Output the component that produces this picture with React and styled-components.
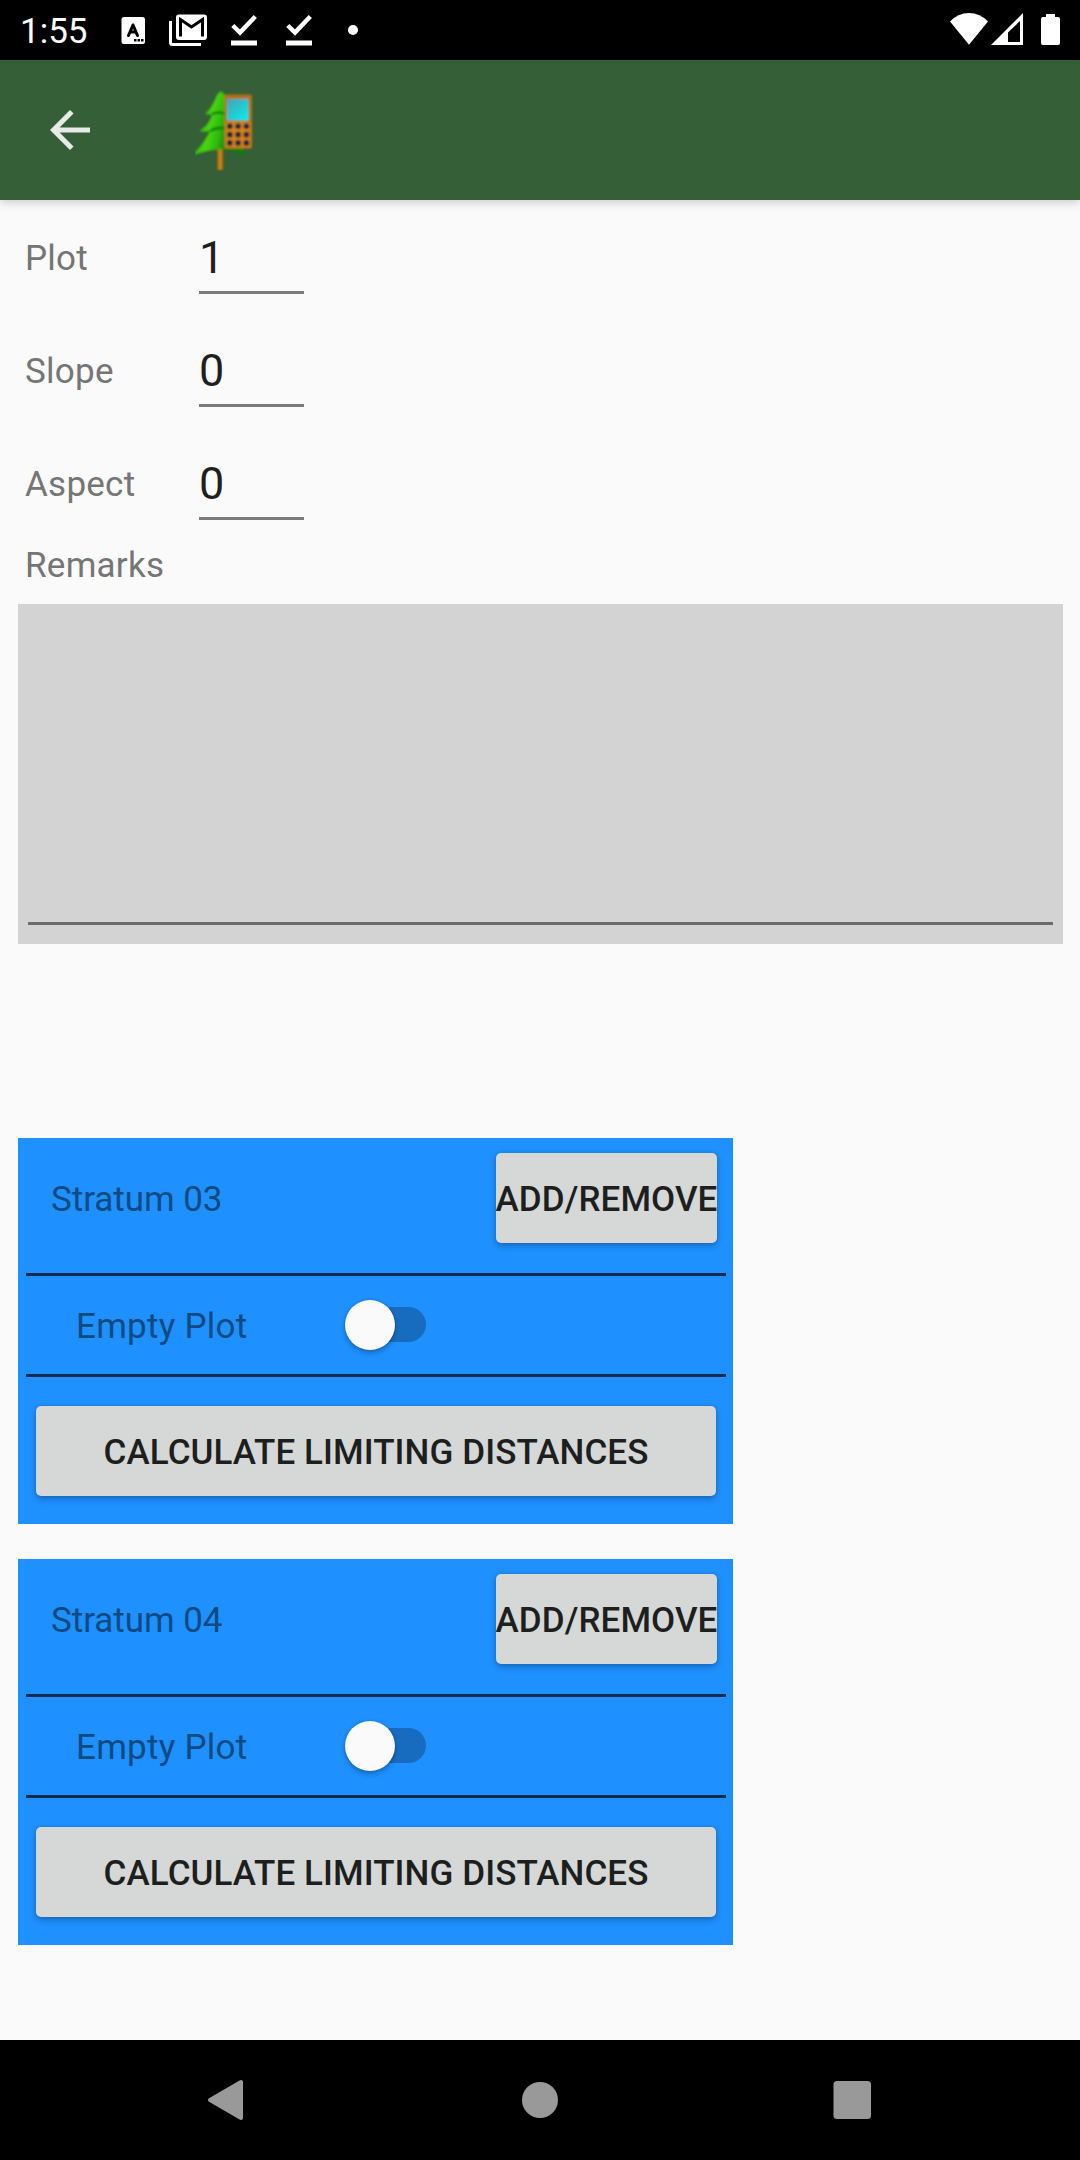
import React, { useState } from "react";
import styled, { createGlobalStyle } from "styled-components";

const GlobalStyle = createGlobalStyle`
  *, *::before, *::after { box-sizing: border-box; }
  body {
    margin: 0;
    background: #fafafa;
    font-family: Roboto, "Noto Sans", sans-serif;
  }
`;

const Screen = styled.div`
  width: 1080px;
  height: 2160px;
  display: flex;
  flex-direction: column;
  overflow: hidden;
  background: #fafafa;
`;

const StatusBar = styled.header`
  flex: none;
  height: 60px;
  padding: 0 18px 0 20px;
  display: flex;
  align-items: center;
  justify-content: space-between;
  background: #000;
  color: #fff;
`;

const Cluster = styled.div`
  display: flex;
  align-items: center;
`;

const Clock = styled.span`
  width: 101px;
  font-size: 35px;
  line-height: 60px;
  padding-top: 3px;
`;

const Glyph = styled.svg`
  display: block;
  flex: none;
`;

const AppBar = styled.div`
  flex: none;
  height: 140px;
  display: flex;
  align-items: center;
  padding-left: 40px;
  gap: 95px;
  background: #355f37;
  box-shadow: 0 2px 8px rgba(0, 0, 0, 0.14), 0 5px 10px rgba(0, 0, 0, 0.05);
`;

const IconButton = styled.button`
  border: 0;
  padding: 0;
  background: none;
  display: flex;
`;

const Content = styled.main`
  flex: 1;
  display: flex;
  flex-direction: column;
  padding: 20px 17px 0 18px;
`;

const Field = styled.label`
  height: 113px;
  display: flex;
  align-items: flex-start;
`;

const Caption = styled.span`
  width: ${(p) => p.$width || "auto"};
  padding: ${(p) => p.$pad || "18px 0 0 7px"};
  font-size: 35px;
  line-height: 42px;
  letter-spacing: ${(p) => p.$spacing || "0.25px"};
  white-space: nowrap;
  color: ${(p) => p.$color || "#757575"};
`;

const NumberInput = styled.input`
  width: 105px;
  height: 74px;
  padding: 4px 0 0;
  border: 0;
  border-bottom: 3px solid #7b7b7b;
  border-radius: 0;
  outline: 0;
  background: none;
  font: 400 45px Roboto, sans-serif;
  color: #1f1f1f;
`;

const RemarksCaption = styled(Caption)`
  height: 59px;
  margin-top: -14px;
`;

const RemarksBox = styled.div`
  height: 340px;
  padding: 0 10px 19px;
  display: flex;
  background: #d3d3d3;
`;

const RemarksInput = styled.textarea`
  flex: 1;
  border: 0;
  border-bottom: 3px solid #6b6b6b;
  border-radius: 0;
  resize: none;
  outline: 0;
  background: none;
  font: 400 45px Roboto, sans-serif;
`;

const StratumList = styled.div`
  display: flex;
  flex-direction: column;
  gap: 35px;
  margin-top: 194px;
`;

const Card = styled.section`
  width: 715px;
  height: 386px;
  padding: 0 7px 0 8px;
  background: #1e90ff;
`;

const CardHead = styled.div`
  height: 138px;
  padding: 15px 9px 0 0;
  display: flex;
  justify-content: space-between;
  align-items: flex-start;
  border-bottom: 3px solid #0c2a49;
`;

const ToggleRow = styled.div`
  height: 101px;
  display: flex;
  align-items: flex-start;
  border-bottom: 3px solid #0c2a49;
`;

const ActionRow = styled.div`
  padding: 29px 10px 0;
  display: flex;
`;

const Button = styled.button`
  width: ${(p) => p.$width};
  height: 90px;
  padding: 4px 0 0;
  border: 0;
  border-radius: 5px;
  display: flex;
  align-items: center;
  justify-content: center;
  overflow: hidden;
  background: #d6d8d7;
  box-shadow: 0 3px 6px rgba(0, 0, 0, 0.24), 0 0 3px rgba(0, 0, 0, 0.14);
  font: 500 35px/42px Roboto, sans-serif;
  letter-spacing: 0.08px;
  white-space: nowrap;
  color: #1d1e1e;
`;

const Switch = styled.button`
  width: 75px;
  height: 35px;
  margin: 31px 0 0 7px;
  padding: 0;
  border: 0;
  border-radius: 18px;
  display: flex;
  align-items: center;
  justify-content: ${(p) => (p.$on ? "flex-end" : "flex-start")};
  background: #176cbf;
`;

const Thumb = styled.span`
  flex: none;
  width: 50px;
  height: 50px;
  margin-left: -6px;
  border-radius: 50%;
  background: #fafafa;
  box-shadow: 0 3px 5px rgba(0, 0, 0, 0.25), 0 0 3px rgba(0, 0, 0, 0.15);
`;

const NavBar = styled.nav`
  flex: none;
  height: 120px;
  display: flex;
  align-items: center;
  justify-content: space-between;
  padding: 0 198px;
  background: #000;
`;

const CARD_TEXT = "#0f4a82";

function TreeLogo() {
  return (
    <Glyph width="64" height="82" viewBox="0 0 64 82">
      <defs>
        <linearGradient id="leaf" x1="0" y1="0" x2="1" y2="0.25">
          <stop offset="0" stopColor="#0b9a08" />
          <stop offset="0.4" stopColor="#46d60c" />
          <stop offset="0.6" stopColor="#2fb808" />
          <stop offset="0.8" stopColor="#087d0c" />
          <stop offset="1" stopColor="#087d0c" />
        </linearGradient>
        <linearGradient id="trunk">
          <stop offset="0" stopColor="#765015" />
          <stop offset="0.45" stopColor="#d39010" />
          <stop offset="1" stopColor="#ad6500" />
        </linearGradient>
        <linearGradient id="display" x1="0" y1="0" x2="0.8" y2="1">
          <stop offset="0" stopColor="#4b9fb0" />
          <stop offset="1" stopColor="#08e9ee" />
        </linearGradient>
        <filter id="soft" x="-10%" y="-10%" width="120%" height="120%">
          <feGaussianBlur stdDeviation="0.8" />
        </filter>
      </defs>
      <g filter="url(#soft)">
        <path d="M22 59h6v22h-6z" fill="url(#trunk)" />
        <path
          d="M25 2.500Q28 2 31 8L42 56L51 63Q50 67 44 65Q35 60 25 60.500Q12 61 1 65.500Q-1 65 1 62Q9 54 15 42Q10 43 5 42.500Q5 41 8 39Q14 35 17 26Q14 25 10.500 25.500Q10 24 13 22Q18 16 22 6Z"
          fill="url(#leaf)"
        />
        <path d="M15 42Q23 37 31 40M17 25Q24 22 30 25" fill="none" stroke="#078009" strokeWidth="2.600" />
        <rect x="29.500" y="5.500" width="27.500" height="54" rx="2" fill="#b4701c" />
        <rect x="30.500" y="33" width="25" height="25.500" fill="#d98718" />
        <rect x="32" y="10" width="21.500" height="21.500" fill="url(#display)" />
        {[0, 1, 2].map((row) =>
          [0, 1, 2].map((col) => (
            <rect key={`${row}${col}`} x={32 + col * 8.3} y={34.5 + row * 8.3} width="5.600" height="5.600" rx="1.500" fill="#1d2138" />
          ))
        )}
      </g>
    </Glyph>
  );
}

function DoneIcon({ gap }) {
  return (
    <Glyph width={gap} height="60" viewBox={`0 0 ${gap} 60`}>
      <path d="M1.800 25.500L9 32.500L24.300 16.500" fill="none" stroke="#fff" strokeWidth="4.500" />
      <path d="M0 40.500h26v5H0z" fill="#fff" />
    </Glyph>
  );
}

function NumberField({ label, initial }) {
  const [value, setValue] = useState(initial);
  return (
    <Field>
      <Caption $width="181px">{label}</Caption>
      <NumberInput value={value} onChange={(e) => setValue(e.target.value)} />
    </Field>
  );
}

function StratumCard({ name }) {
  const [empty, setEmpty] = useState(false);
  return (
    <Card>
      <CardHead>
        <Caption $color={CARD_TEXT} $pad="26px 0 0 25px" $spacing="-0.05px">{name}</Caption>
        <Button $width="221px">ADD/REMOVE</Button>
      </CardHead>
      <ToggleRow>
        <Caption $color={CARD_TEXT} $pad="30px 0 0 50px" $width="318px">Empty Plot</Caption>
        <Switch role="switch" aria-checked={empty} $on={empty} onClick={() => setEmpty(!empty)}>
          <Thumb />
        </Switch>
      </ToggleRow>
      <ActionRow>
        <Button $width="680px">CALCULATE LIMITING DISTANCES</Button>
      </ActionRow>
    </Card>
  );
}

export default function App() {
  return (
    <Screen>
      <GlobalStyle />
      <StatusBar>
        <Cluster>
          <Clock>1:55</Clock>
          <Glyph width="48" height="60" viewBox="0 0 48 60">
            <rect x="0.500" y="17" width="23.500" height="27" rx="2.500" fill="#fff" />
            <path d="M7.500 35.500L12 25L16.500 35.500M9 32h6" fill="none" stroke="#000" strokeWidth="3" strokeLinejoin="round" strokeLinecap="round" />
            <path d="M13 39h2.500v2.500H13zM16.500 39H19v2.500h-2.500zM20 39h2.500v2.500H20z" fill="#000" />
          </Glyph>
          <Glyph width="62" height="60" viewBox="0 0 62 60">
            <rect x="7" y="14.500" width="31" height="25.500" rx="3" fill="#fff" />
            <path d="M11.500 36.500V19.500L22.500 27L33.500 19.500V36.500" fill="none" stroke="#000" strokeWidth="3" />
            <path d="M1.500 21V42.500Q1.500 44.500 3.500 44.500H32" fill="none" stroke="#fff" strokeWidth="3" />
          </Glyph>
          <DoneIcon gap={55} />
          <DoneIcon gap={62} />
          <Glyph width="12" height="60" viewBox="0 0 12 60">
            <circle cx="5" cy="30" r="5" fill="#fff" />
          </Glyph>
        </Cluster>
        <Glyph width="112" height="60" viewBox="950 0 112 60">
          <path d="M950 21.500Q958 13 969 13T988 21.500L969 44.700Z" fill="#fff" />
          <path fillRule="evenodd" d="M991 45L1023 13V45ZM1008 42H1020V21L1008 32.500Z" fill="#fff" />
          <path d="M1046 14H1055V17H1058Q1060 17 1060 19V43Q1060 45 1058 45H1043Q1041 45 1041 43V19Q1041 17 1043 17H1046Z" fill="#fff" />
        </Glyph>
      </StatusBar>
      <AppBar>
        <IconButton aria-label="Back">
          <Glyph width="60" height="60" viewBox="0 0 24 24">
            <path d="M20 11H7.830l5.590-5.590L12 4l-8 8 8 8 1.410-1.410L7.830 13H20v-2z" fill="#e8ece8" />
          </Glyph>
        </IconButton>
        <TreeLogo />
      </AppBar>
      <Content>
        <NumberField label="Plot" initial="1" />
        <NumberField label="Slope" initial="0" />
        <NumberField label="Aspect" initial="0" />
        <RemarksCaption $pad="0 0 0 7px">Remarks</RemarksCaption>
        <RemarksBox>
          <RemarksInput aria-label="Remarks" />
        </RemarksBox>
        <StratumList>
          <StratumCard name="Stratum 03" />
          <StratumCard name="Stratum 04" />
        </StratumList>
      </Content>
      <NavBar>
        <Glyph width="55" height="60" viewBox="198 2070 55 60">
          <path d="M241 2082V2118L210 2100Z" fill="#999" stroke="#999" strokeWidth="4" strokeLinejoin="round" />
        </Glyph>
        <Glyph width="38" height="38" viewBox="0 0 38 38">
          <circle cx="19" cy="19" r="18" fill="#999" />
        </Glyph>
        <Glyph width="55" height="60" viewBox="827 2070 55 60">
          <rect x="833.500" y="2081" width="37.500" height="38" rx="3.500" fill="#999" />
        </Glyph>
      </NavBar>
    </Screen>
  );
}
